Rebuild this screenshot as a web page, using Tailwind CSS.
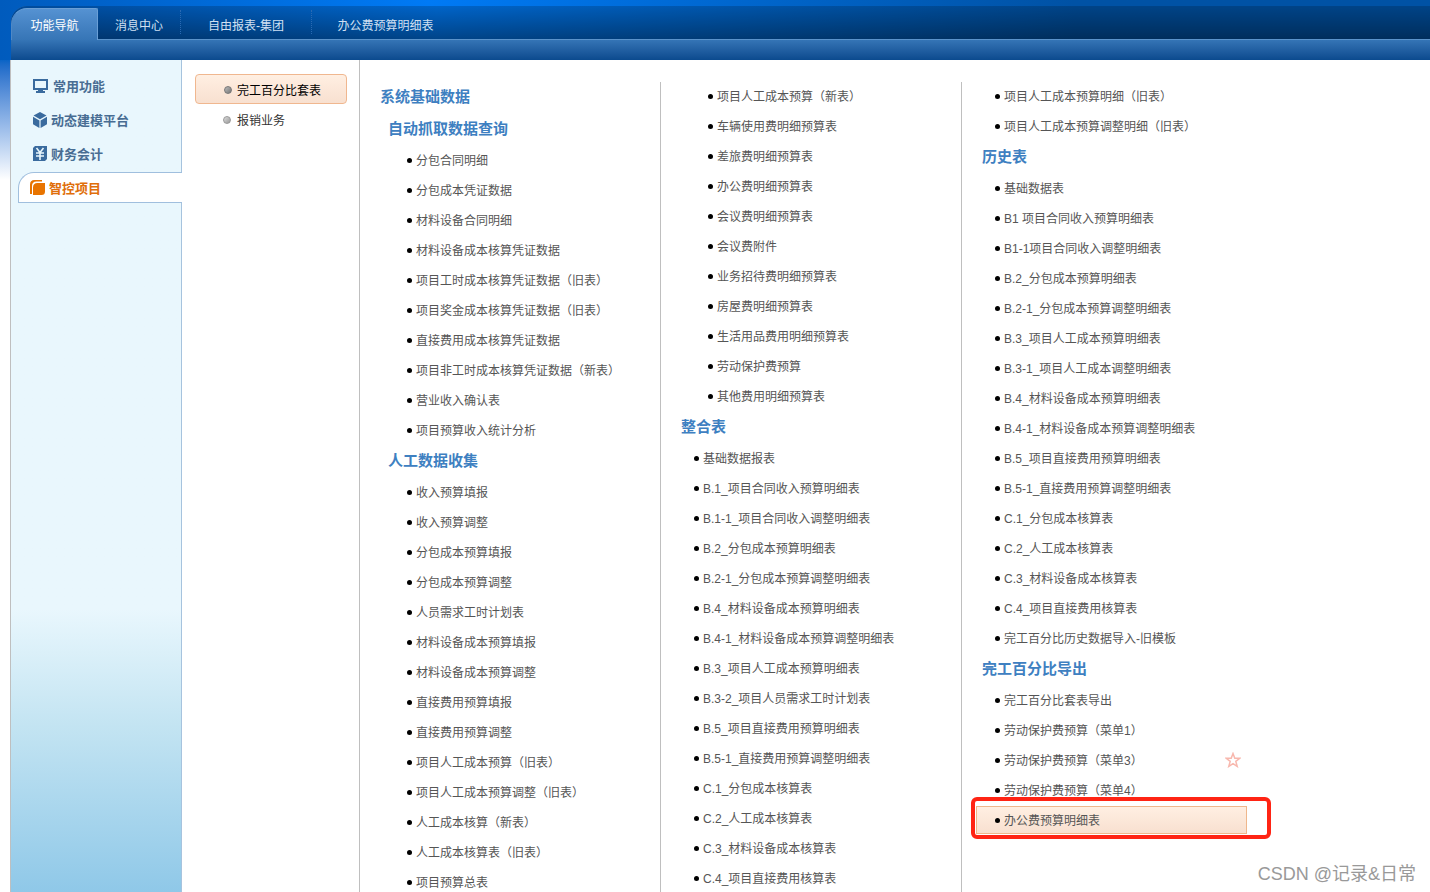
<!DOCTYPE html>
<html lang="zh-CN">
<head>
<meta charset="utf-8">
<title>功能导航</title>
<script src="https://cdn.jsdelivr.net/npm/@tailwindcss/browser@4"></script>
</head>
<body class="h-screen overflow-hidden bg-white font-['Liberation_Sans','Noto_Sans_CJK_SC',sans-serif] text-xs text-[#555]">
<div class="flex h-full flex-col">
  <header class="h-[60px] shrink-0 bg-linear-to-r from-[#005bbd] from-0% via-[#007af5] via-30% to-[#0052a5] to-75% pt-[6px] pl-[11px]">
    <div class="flex h-[54px] flex-col rounded-tl-2xl bg-linear-to-b from-[#3878b9] from-60% to-[#0b4a8e]">
      <nav class="flex h-[34px] bg-linear-to-r from-[#005bbd] from-0% via-[#007af5] via-30% to-[#0052a5] to-75% rounded-tl-2xl" aria-label="页签">
        <div class="flex h-full w-full rounded-tl-2xl bg-linear-to-b from-black/18 to-black/45">
          <a href="#" class="mt-[2px] flex h-8 w-[87px] items-center justify-center rounded-tl-2xl rounded-tr-xs border-t border-r border-l border-[#6a9fd6] border-l-[#4f88c6] bg-linear-to-b from-[#5592d2] to-[#3675b6] pt-[2px] text-white">功能导航</a>
          <div class="flex flex-1 border-b border-[#5a93cb] text-[#d0e0f2]">
            <a href="#" class="mt-1 flex h-[24px] w-[83px] items-center justify-center border-r border-dotted border-[#2a6ab3] pt-2">消息中心</a>
            <a href="#" class="mt-1 flex h-[24px] w-[131px] items-center justify-center border-r border-dotted border-[#2a6ab3] pt-2">自由报表-集团</a>
            <a href="#" class="mt-1 flex h-[24px] w-[147px] items-center justify-center pt-2">办公费预算明细表</a>
          </div>
        </div>
      </nav>
    </div>
  </header>

  <div class="flex min-h-0 flex-1">
    <div class="h-[120px] w-[10px] shrink-0 bg-linear-to-b from-[#0864c6] to-white"></div>

    <aside class="w-[172px] shrink-0 border-l border-[#bfbfbf] bg-linear-to-b from-[#e9f7fd] from-66% via-[#c3e4f2] via-80% to-[#8fc8e8]">
      <nav class="flex h-full flex-col text-[13px] font-bold text-[#486d93]" aria-label="模块">
        <div class="h-[112px] border-r border-[#a6c3de] pt-[10px] [&_svg]:mb-[2px]">
          <a href="#" class="flex h-[34px] items-center gap-1 pl-[22px]">
            <svg class="size-4" viewBox="0 0 16 16" fill="#3a6b9e" aria-hidden="true"><path fill-rule="evenodd" d="M0 1h15v11H0zM2 3v7h11V3zM5 12h5v1h2v2H3v-2h2z"/></svg>常用功能</a>
          <a href="#" class="flex h-[34px] items-center gap-[2px] pl-[22px]">
            <svg class="size-4" viewBox="0 0 16 16" fill="#3a6b9e" aria-hidden="true"><path d="M7 0l6.500 3.600L7 7.200.500 3.600zM0 4.800l6.400 3.600V16L0 12.300zM14 4.800L7.600 8.400V16l6.400-3.700z"/></svg>动态建模平台</a>
          <a href="#" class="flex h-[34px] items-center gap-[2px] pl-[22px]">
            <svg class="size-4" viewBox="0 0 16 16" aria-hidden="true"><path fill="#3a6b9e" d="M2 0h12v13l-2 2H0V2z"/><path d="M3.500 2L7 6.500 10.500 2M3 7h8M3 10h8M7 6v8" fill="none" stroke="#e9f7fd" stroke-width="1.600"/></svg>财务会计</a>
        </div>
        <div class="pl-[7px]">
          <a href="#" aria-current="page" class="flex h-[31px] items-center gap-[3px] rounded-tl-2xl border-t border-b border-l border-[#a0bfde] bg-white pt-[2px] pl-[11px] text-[#e06e0a]">
            <svg class="mb-[2px] size-4 shrink-0" viewBox="0 0 16 16" fill="#e87400" aria-hidden="true"><path d="M0 14V4.500Q0 0 4.500 0H12v1.500H6.500Q2 1.500 2 6v8zM3 15V7.500Q3 3 7.500 3H15v8.500q0 3.500-3.500 3.500z"/></svg>智控项目</a>
        </div>
        <div class="flex-1 border-r border-[#a6c3de]"></div>
      </nav>
    </aside>

    <nav class="w-[178px] shrink-0 border-r border-[#bfbfbf] px-3 pt-[14px] text-[#333]" aria-label="分类">
      <a href="#" class="ml-[1px] flex h-[30px] w-[152px] items-center gap-[5px] rounded border border-[#f0b78f] bg-linear-to-b from-[#ffefe2] to-[#f8e0d0] pt-[3px] pl-7 text-black"><span class="mb-[2px] size-2 rounded-full border border-[#777] bg-linear-to-br from-[#bbb] to-[#777]"></span>完工百分比套表</a>
      <a href="#" class="flex h-[30px] items-center gap-[6px] pt-[3px] pl-[29px]"><span class="mb-[2px] size-2 rounded-full border border-[#999] bg-linear-to-br from-[#ddd] to-[#999]"></span>报销业务</a>
    </nav>

    <main class="flex min-w-0 flex-1 pt-[22px] whitespace-nowrap [&_a]:flex [&_a]:h-7 [&_a]:flex-1 [&_a]:items-center [&_a]:border [&_a]:border-transparent [&_a]:pt-[2px] [&_a]:before:mr-1 [&_a]:before:mb-[2px] [&_a]:before:size-[5px] [&_a]:before:rounded-full [&_a]:before:bg-black [&_h2]:h-8 [&_h2]:pl-5 [&_h2]:text-[15px] [&_h2]:leading-8 [&_h2]:font-bold [&_h2]:text-[#3e80c1] [&_h3]:h-8 [&_h3]:pl-7 [&_h3]:text-[15px] [&_h3]:leading-8 [&_h3]:font-bold [&_h3]:text-[#3e80c1] [&_li]:flex [&_li]:h-[30px] [&_li]:items-center [&_li]:pr-4 [&_li]:pl-[14px]">
      <section class="max-w-[301px] flex-1 border-r border-[#bfbfbf]">
        <div class="-mt-[1px]">
          <h2>系统基础数据</h2>
          <h3>自动抓取数据查询</h3>
          <ul class="[&_a]:pl-8">
            <li><a href="#">分包合同明细</a></li>
            <li><a href="#">分包成本凭证数据</a></li>
            <li><a href="#">材料设备合同明细</a></li>
            <li><a href="#">材料设备成本核算凭证数据</a></li>
            <li><a href="#">项目工时成本核算凭证数据（旧表）</a></li>
            <li><a href="#">项目奖金成本核算凭证数据（旧表）</a></li>
            <li><a href="#">直接费用成本核算凭证数据</a></li>
            <li><a href="#">项目非工时成本核算凭证数据（新表）</a></li>
            <li><a href="#">营业收入确认表</a></li>
            <li><a href="#">项目预算收入统计分析</a></li>
          </ul>
          <h3>人工数据收集</h3>
          <ul class="[&_a]:pl-8">
            <li><a href="#">收入预算填报</a></li>
            <li><a href="#">收入预算调整</a></li>
            <li><a href="#">分包成本预算填报</a></li>
            <li><a href="#">分包成本预算调整</a></li>
            <li><a href="#">人员需求工时计划表</a></li>
            <li><a href="#">材料设备成本预算填报</a></li>
            <li><a href="#">材料设备成本预算调整</a></li>
            <li><a href="#">直接费用预算填报</a></li>
            <li><a href="#">直接费用预算调整</a></li>
            <li><a href="#">项目人工成本预算（旧表）</a></li>
            <li><a href="#">项目人工成本预算调整（旧表）</a></li>
            <li><a href="#">人工成本核算（新表）</a></li>
            <li><a href="#">人工成本核算表（旧表）</a></li>
            <li><a href="#">项目预算总表</a></li>
          </ul>
        </div>
      </section>

      <section class="max-w-[301px] flex-1 border-r border-[#bfbfbf]">
        <div class="-mt-[1px]">
          <ul class="[&_a]:pl-8">
            <li><a href="#">项目人工成本预算（新表）</a></li>
            <li><a href="#">车辆使用费明细预算表</a></li>
            <li><a href="#">差旅费明细预算表</a></li>
            <li><a href="#">办公费明细预算表</a></li>
            <li><a href="#">会议费明细预算表</a></li>
            <li><a href="#">会议费附件</a></li>
            <li><a href="#">业务招待费明细预算表</a></li>
            <li><a href="#">房屋费明细预算表</a></li>
            <li><a href="#">生活用品费用明细预算表</a></li>
            <li><a href="#">劳动保护费预算</a></li>
            <li><a href="#">其他费用明细预算表</a></li>
          </ul>
          <h2>整合表</h2>
          <ul class="[&_a]:pl-[18px]">
            <li><a href="#">基础数据报表</a></li>
            <li><a href="#">B.1_项目合同收入预算明细表</a></li>
            <li><a href="#">B.1-1_项目合同收入调整明细表</a></li>
            <li><a href="#">B.2_分包成本预算明细表</a></li>
            <li><a href="#">B.2-1_分包成本预算调整明细表</a></li>
            <li><a href="#">B.4_材料设备成本预算明细表</a></li>
            <li><a href="#">B.4-1_材料设备成本预算调整明细表</a></li>
            <li><a href="#">B.3_项目人工成本预算明细表</a></li>
            <li><a href="#">B.3-2_项目人员需求工时计划表</a></li>
            <li><a href="#">B.5_项目直接费用预算明细表</a></li>
            <li><a href="#">B.5-1_直接费用预算调整明细表</a></li>
            <li><a href="#">C.1_分包成本核算表</a></li>
            <li><a href="#">C.2_人工成本核算表</a></li>
            <li><a href="#">C.3_材料设备成本核算表</a></li>
            <li><a href="#">C.4_项目直接费用核算表</a></li>
          </ul>
        </div>
      </section>

      <section class="max-w-[301px] flex-1">
        <div class="-mt-[1px]">
          <ul class="[&_a]:pl-[18px]">
            <li><a href="#">项目人工成本预算明细（旧表）</a></li>
            <li><a href="#">项目人工成本预算调整明细（旧表）</a></li>
          </ul>
          <h2>历史表</h2>
          <ul class="[&_a]:pl-[18px]">
            <li><a href="#">基础数据表</a></li>
            <li><a href="#">B1 项目合同收入预算明细表</a></li>
            <li><a href="#">B1-1项目合同收入调整明细表</a></li>
            <li><a href="#">B.2_分包成本预算明细表</a></li>
            <li><a href="#">B.2-1_分包成本预算调整明细表</a></li>
            <li><a href="#">B.3_项目人工成本预算明细表</a></li>
            <li><a href="#">B.3-1_项目人工成本调整明细表</a></li>
            <li><a href="#">B.4_材料设备成本预算明细表</a></li>
            <li><a href="#">B.4-1_材料设备成本预算调整明细表</a></li>
            <li><a href="#">B.5_项目直接费用预算明细表</a></li>
            <li><a href="#">B.5-1_直接费用预算调整明细表</a></li>
            <li><a href="#">C.1_分包成本核算表</a></li>
            <li><a href="#">C.2_人工成本核算表</a></li>
            <li><a href="#">C.3_材料设备成本核算表</a></li>
            <li><a href="#">C.4_项目直接费用核算表</a></li>
            <li><a href="#">完工百分比历史数据导入-旧模板</a></li>
          </ul>
          <h2>完工百分比导出</h2>
          <ul class="[&_a]:pl-[18px]">
            <li><a href="#">完工百分比套表导出</a></li>
            <li><a href="#">劳动保护费预算（菜单1）</a></li>
            <li><a href="#">劳动保护费预算（菜单3）</a>
              <button type="button" aria-label="收藏" class="mr-[6px]"><svg class="size-4" viewBox="0 0 16 16" fill="none" stroke="#f8b8ae" stroke-width="1.500" aria-hidden="true"><path d="M8 1.500l1.800 4.700 5 .1-4 3.100 1.400 5L8 11.600l-4.200 2.800 1.400-5-4-3.100 5-.1z"/></svg></button></li>
            <li><a href="#">劳动保护费预算（菜单4）</a></li>
            <li class="relative"><a href="#" class="border-[#efb78c]! bg-linear-to-b from-[#ffefe2] to-[#f8e0d0]">办公费预算明细表</a>
              <span class="pointer-events-none absolute -top-2 left-[9px] h-[42px] w-[300px] rounded-md border-4 border-[#ff2414]"></span></li>
          </ul>
        </div>
      </section>
    </main>
  </div>
</div>
<div class="absolute right-[14px] bottom-1 text-lg leading-7 text-[#999]">CSDN @记录&amp;日常</div>
</body>
</html>
